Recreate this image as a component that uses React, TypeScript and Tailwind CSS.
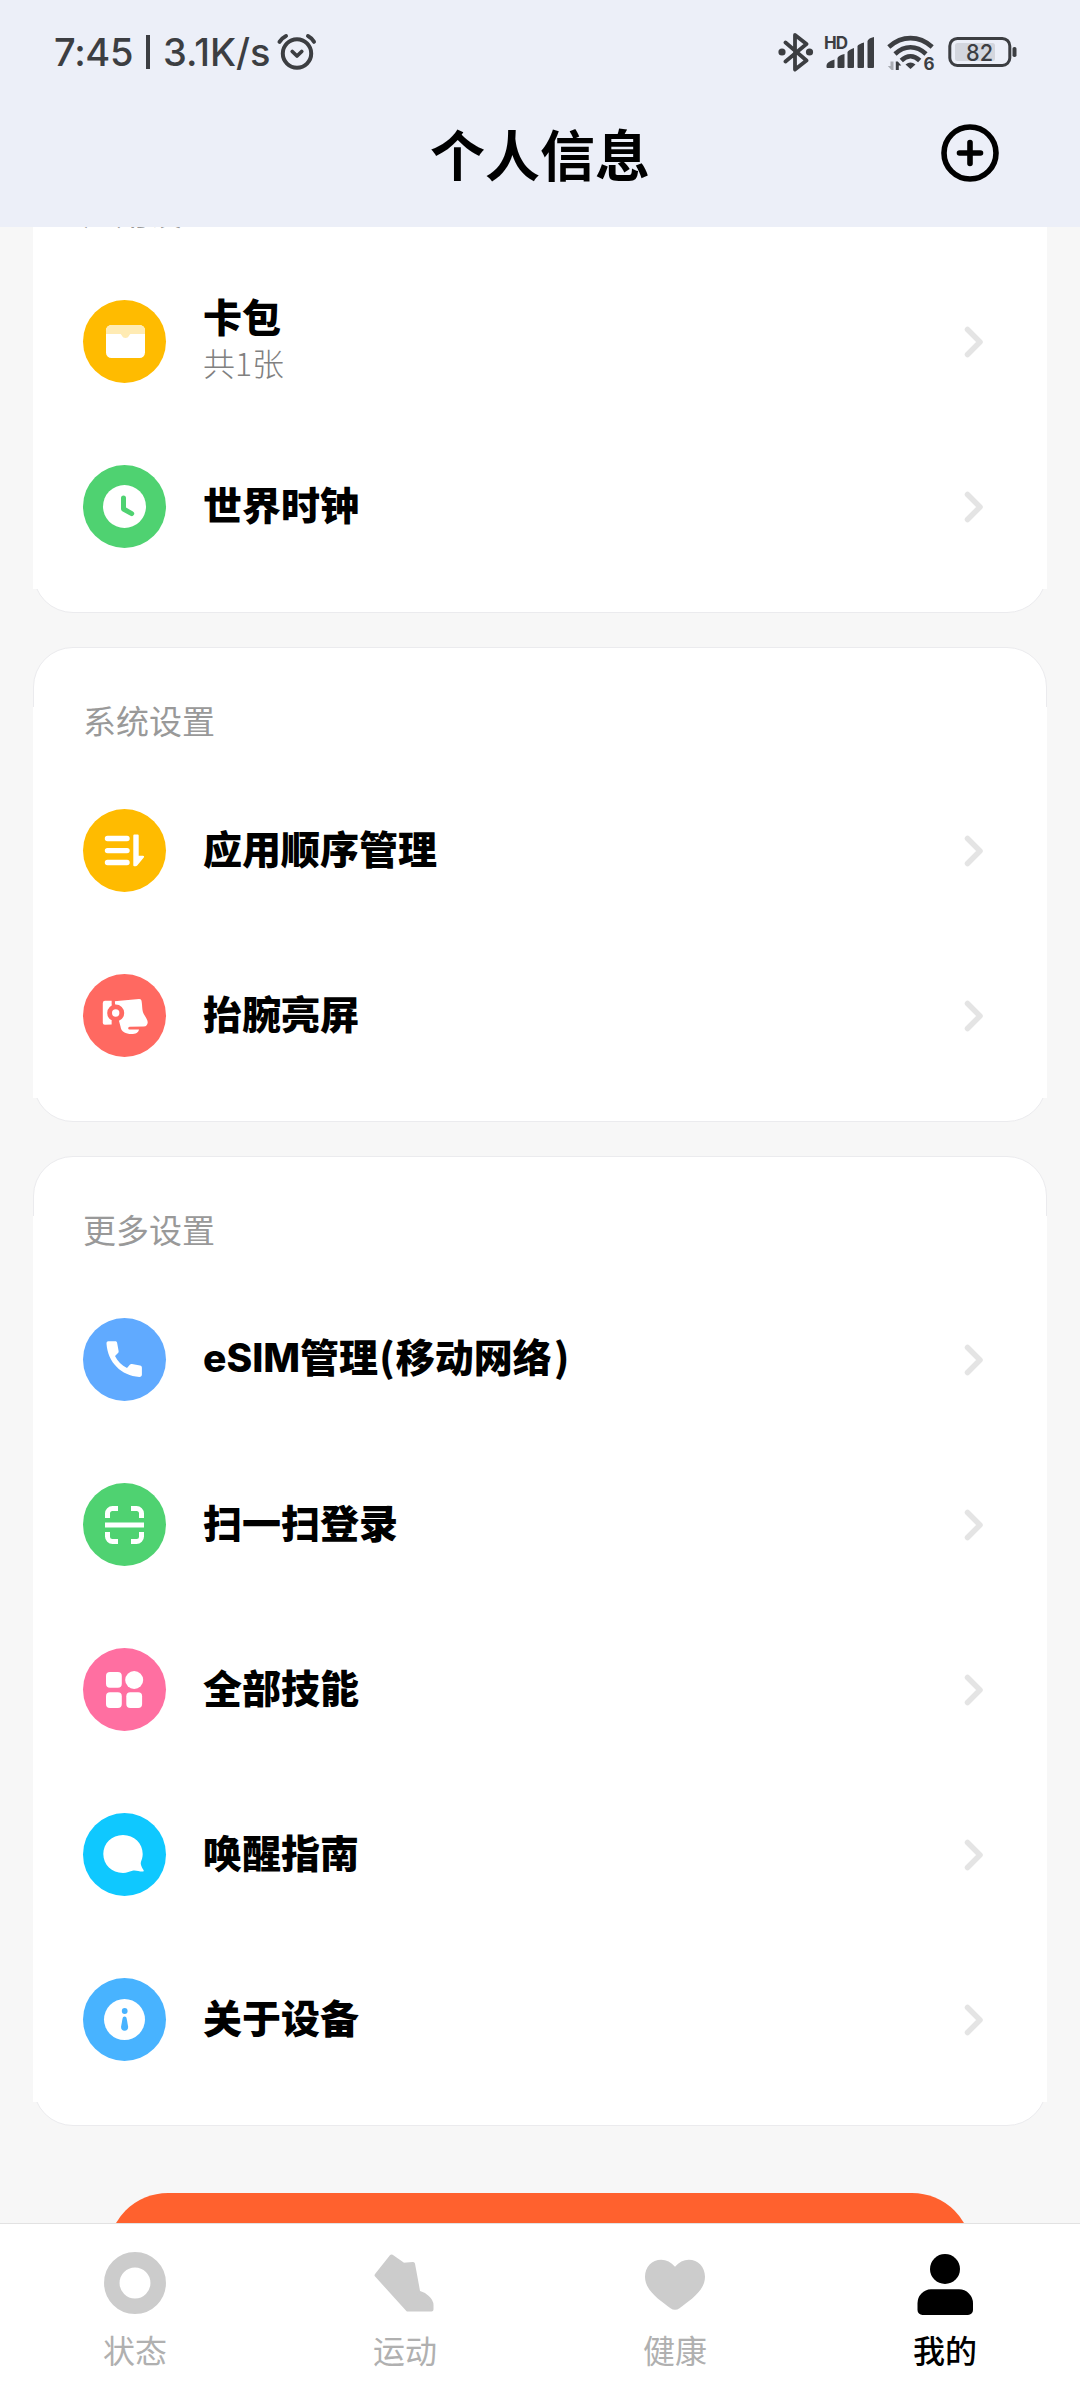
import React from 'react';

const CJK = "font-['Noto_Sans_CJK_SC',sans-serif]";

type Row = {
  label: React.ReactNode;
  sub?: string;
  color: string;
  icon: React.ReactNode;
};

const apps: Row[] = [
  {
    label: '卡包',
    sub: '共1张',
    color: 'bg-[#ffbb00]',
    icon: (
      <>
        <rect x="23" y="25" width="39" height="33" rx="5.5" fill="#fff" />
        <path d="M23 34v-3.5a5.5 5.5 0 0 1 5.5-5.5h28a5.5 5.5 0 0 1 5.5 5.5V34H47.5c-1.2 0-1.4 4-5 4s-3.8-4-5-4z" fill="#ffebb3" />
      </>
    ),
  },
  {
    label: '世界时钟',
    color: 'bg-[#4fd271]',
    icon: (
      <>
        <circle cx="41.5" cy="41.5" r="21.5" fill="#fff" />
        <path d="M40.5 33v11l8.2 4.6" fill="none" stroke="#4fd271" strokeWidth="5" strokeLinecap="round" strokeLinejoin="round" />
      </>
    ),
  },
];

const system: Row[] = [
  {
    label: '应用顺序管理',
    color: 'bg-[#ffbb00]',
    icon: (
      <>
        <path d="M24.5 29.5h19.5M24.5 41.6h19.5M24.5 53.5h19.5" stroke="#fff" strokeWidth="5.4" strokeLinecap="round" />
        <path d="M51.3 25.4h3.4a1 1 0 0 1 1 1v20.4h4.2c1.2 0 1.5.9.9 1.7l-6.6 8a2 2 0 0 1-1.6.8h-1.3a1 1 0 0 1-1-1V26.4a1 1 0 0 1 1-1z" fill="#fff" />
      </>
    ),
  },
  {
    label: '抬腕亮屏',
    color: 'bg-[#ff6961]',
    icon: (
      <>
        <path d="M22 26.8h6.8v23.6l-7 .3a2 2 0 0 1-2-2V29a2.2 2.2 0 0 1 2.2-2.2z" fill="#fff" />
        <path d="M31.5 27.2L56 25.1c1.6-.1 2.4.7 2.6 2.2.9 5.4.2 9 2.3 13 1.4 2.6 3.9 5.4 3.8 8.2-.2 2.4-1.2 3.9-4 4l-14 .3c-2 .1-2 2.7 0 2.7h9.3c-.4 3.2-3.3 4.5-7.7 4.5-5.3 0-10.3-2.2-10.8-7.5L36 47z" fill="#fff" />
        <path d="M28.8 26h3v4.6h-3zM28.8 47h3v5h-3z" fill="#ff6961" />
        <circle cx="32.7" cy="39" r="6.1" fill="#fff" stroke="#ff6961" strokeWidth="4.8" />
      </>
    ),
  },
];

const more: Row[] = [
  {
    label: (
      <>
        <span className="font-['Inter'] font-extrabold">eSIM</span>管理
        <span className="mr-px ml-px">(</span>移动网络<span className="ml-0.5">)</span>
      </>
    ),
    color: 'bg-[#60aaff]',
    icon: (
      <path
        d="M25.3 23.2h7c1 0 1.7.6 1.8 1.6l1.5 8.2c.2.9 0 1.5-.6 2.1l-3 3c2.6 5.2 6.6 9.2 12 11.9l2.8-3.2c.6-.7 1.3-.9 2.2-.7l8 1.5c1.2.2 1.9.9 1.9 2.1v6.9c0 1.6-.9 2.3-2.5 2.3-18.3-1.3-31.5-14.5-32.9-33.2-.1-1.6.4-2.5 1.8-2.5z"
        fill="#fff"
      />
    ),
  },
  {
    label: '扫一扫登录',
    color: 'bg-[#4fd271]',
    icon: (
      <path
        d="M35 25.5h-5.5a5 5 0 0 0-5 5V35M48 25.5h5.5a5 5 0 0 1 5 5V35M35 58.5h-5.5a5 5 0 0 1-5-5V49M48 58.5h5.5a5 5 0 0 0 5-5V49M22 42h39"
        fill="none"
        stroke="#fff"
        strokeWidth="5"
      />
    ),
  },
  {
    label: '全部技能',
    color: 'bg-[#ff6fa1]',
    icon: (
      <g fill="#fff">
        <rect x="23" y="24" width="15.8" height="15.8" rx="4" />
        <circle cx="51.2" cy="32" r="9" />
        <rect x="23" y="44.3" width="15.8" height="15.8" rx="4" />
        <rect x="43.3" y="44.3" width="15.8" height="15.8" rx="4" />
      </g>
    ),
  },
  {
    label: '唤醒指南',
    color: 'bg-[#0fc8ff]',
    icon: (
      <path
        d="M40 22c11.2 0 19.7 8.3 19.7 19 0 3.3-1 6-1.8 8-.7 2 .8 5.3 2.6 8 .5.9.2 1.5-.7 1.5-3.7.1-6.8-1.5-9.6-.9-3.3 1-6.3 2.4-10.2 2.4-11.2 0-19.7-8.5-19.7-19S28.8 22 40 22z"
        fill="#fff"
      />
    ),
  },
  {
    label: '关于设备',
    color: 'bg-[#48b3ff]',
    icon: (
      <>
        <circle cx="41.5" cy="41.5" r="20.5" fill="#fff" />
        <circle cx="41.7" cy="33" r="2.9" fill="#48b3ff" />
        <path d="M41.6 38.5c1.2 0 1.8.9 2.1 2.3l1.4 7.7c.4 2.5-1.2 4.3-3.5 4.3s-3.9-1.8-3.5-4.3l1.4-7.7c.3-1.4.9-2.3 2.1-2.3z" fill="#48b3ff" />
      </>
    ),
  },
];

const tabs = [
  {
    label: '状态',
    icon: <circle cx="32" cy="32" r="23.2" fill="none" stroke="#ccc" strokeWidth="15.5" />,
  },
  {
    label: '运动',
    icon: (
      <path
        d="M18.5 5.5L30.6 13.8L40 12.9L45.3 41.5C52 43.5 58.5 48.5 58.5 54V58.6H34.8L3.6 24.2Z"
        fill="#ccc"
        stroke="#ccc"
        strokeWidth="4"
        strokeLinejoin="round"
      />
    ),
  },
  {
    label: '健康',
    icon: (
      <path
        d="M32 15.7C28 11 23.5 8.7 18.2 8.7 9 8.7 2 16 2 25.7 2 40 17.5 49.5 27.5 57.2Q32 60.2 36.5 57.2C46.5 49.5 62 40 62 25.7 62 16 55 8.7 45.8 8.7 40.5 8.7 36 11 32 15.7z"
        fill="#ccc"
      />
    ),
  },
  {
    label: '我的',
    active: true,
    icon: (
      <g fill="#000">
        <circle cx="32" cy="18" r="15" />
        <path d="M18 38.3h28a14 14 0 0 1 14 14V59a5 5 0 0 1-5 5H9.5a5 5 0 0 1-5-5v-6.7A14 14 0 0 1 18 38.3z" />
      </g>
    ),
  },
];

function StatusBar() {
  return (
    <div className="flex h-[103px] items-start justify-between pt-8 pl-[54px] pr-[62px] text-[#3c3e42]">
      <div className="flex h-10 items-center font-['Inter'] text-[38px] leading-10 font-medium">
        <span className="w-[92px] tracking-[-0.3px]">7:45</span>
        <span className="h-[34px] w-1 bg-[#3c3e42]" />
        <span className="ml-[13px] w-[113px]">3.1K/s</span>
        <svg width="42" height="40" viewBox="0 0 42 40" fill="none" stroke="currentColor" strokeLinecap="round" strokeLinejoin="round">
          <circle cx="21" cy="21.5" r="14.2" strokeWidth="4" />
          <path d="M16.3 19.5l4.7 4.5 4.7-4.5" strokeWidth="3.8" />
          <path d="M3.5 9.8Q6 6 10 4M38 9.8Q35.8 6 32 4" strokeWidth="4" />
        </svg>
      </div>

      <div className="flex h-10">
        <svg className="mr-[9px]" width="38" height="40" viewBox="0 0 38 40">
          <path d="M8.5 10.5L29.5 28.5L18 37.5V3L29.5 12L8.5 29.5" fill="none" stroke="currentColor" strokeWidth="3.8" strokeLinejoin="round" strokeLinecap="round" />
          <circle cx="5" cy="20" r="3.6" fill="currentColor" />
          <circle cx="32.5" cy="20" r="3.6" fill="currentColor" />
        </svg>
        <svg className="mr-[11px]" width="52" height="40" viewBox="0 0 52 40" fill="currentColor">
          <text x="0" y="16.5" fontSize="17" fontWeight="700" fontFamily="Inter" textLength="24">HD</text>
          <path d="M2.5 33.5q0-3.5 8-6V35q0 1-1 1h-6q-1 0-1-1zM13.5 26q1-2.5 7-4V35q0 1-1 1h-5q-1 0-1-1zM23.5 20q1-2 6.5-4V35q0 1-1 1h-4.5q-1 0-1-1zM33.5 14q1-2 6.5-3.5V35q0 1-1 1h-4.5q-1 0-1-1zM43.5 9q1-3 6.5-4V35q0 1-1 1h-4.5q-1 0-1-1z" />
        </svg>
        <svg className="mr-[13px]" width="48" height="40" viewBox="0 0 48 40">
          <g fill="none" stroke="currentColor" strokeWidth="4.6">
            <path d="M1.8 15C15 3.2 32 3.2 45.2 15" />
            <path d="M8 22C17.5 13 29.5 13 39 22" />
            <path d="M14.3 28.5C20 23 27 23 32.7 28.5" />
          </g>
          <path d="M23.5 37l-5-4.6q5-4 10 0z" fill="currentColor" />
          <path d="M6.5 29.5V38H4.5L.8 34h2.7v-4.5z" fill="#a9acb3" />
          <path d="M8.8 38V29.5h2l3.5 4h-2.500V38z" fill="currentColor" />
          <text x="36.5" y="38" fontSize="17" fontWeight="700" fontFamily="Inter" fill="currentColor">6</text>
        </svg>
        <svg width="70" height="40" viewBox="0 0 70 40">
          <rect x="1.8" y="6.4" width="60" height="27" rx="7.5" fill="none" stroke="currentColor" strokeWidth="3" />
          <rect x="7" y="11" width="40" height="18" rx="2.5" fill="#d3d6de" />
          <rect x="64.5" y="15" width="4" height="10" rx="1.8" fill="currentColor" />
          <text x="18" y="28.5" fontSize="23" fontWeight="500" fontFamily="Inter" fill="currentColor" textLength="27" lengthAdjust="spacingAndGlyphs">82</text>
        </svg>
      </div>
    </div>
  );
}

function Section({ title, rows }: { title: string; rows: Row[] }) {
  return (
    <section className="mx-[33px] shrink-0 rounded-[40px] border border-[#ebebee] bg-white pt-[59px] pb-[23px]">
      <div className="-mx-px flex h-[61px] items-start bg-white pl-[50px]">
        <h2 className={`${CJK} -mt-[3px] text-[33px] leading-[33px] text-[#999999]`}>{title}</h2>
      </div>
      <ul>
        {rows.map((row, i) => (
          <li key={i} className="-mx-px flex h-[165px] items-center bg-white pl-[50px] pr-[63px]">
            <span className={`${row.color} h-[83px] w-[83px] rounded-full`}>
              <svg width="83" height="83" viewBox="0 0 83 83">{row.icon}</svg>
            </span>
            <div className={`${CJK} ml-[37px] flex-1 pb-[7px]`}>
              <div className="text-[39px] leading-[48px] font-black text-black">{row.label}</div>
              {row.sub && <div className="text-[32px] leading-[46px] font-light text-[#808080]">{row.sub}</div>}
            </div>
            <svg width="20" height="34" viewBox="0 0 20 34" fill="none" stroke="#e4e4e4" strokeWidth="5.5">
              <path d="M3.5 4.5l12.5 12.5L3.5 29.5" strokeLinejoin="round" strokeLinecap="round" />
            </svg>
          </li>
        ))}
      </ul>
    </section>
  );
}

export default function App() {
  return (
    <div className="flex h-[2400px] w-[1080px] flex-col overflow-hidden bg-[#f7f7f7]">
      {/* Header */}
      <header className="h-[227px] shrink-0 bg-[#eceff8]">
        <StatusBar />
        <div className="grid h-[100px] grid-cols-[1fr_auto_1fr] items-center pr-[81px] pl-[81px]">
          <span />
          <h1 className={`${CJK} pb-[3px] text-[55px] leading-[80px] font-bold text-black`}>个人信息</h1>
          <button className="justify-self-end">
            <svg width="58" height="58" viewBox="0 0 58 58" fill="none" stroke="#000" strokeWidth="5.6">
              <circle cx="29" cy="29" r="26" />
              <path d="M29 18.5v21M18.5 29h21" strokeLinecap="round" />
            </svg>
          </button>
        </div>
      </header>

      {/* Settings list, scrolled under the header */}
      <main className="flex min-h-0 flex-1 flex-col gap-[34px] overflow-hidden">
        <div className="-mt-[89px] shrink-0">
          <Section title="应用设置" rows={apps} />
        </div>
        <Section title="系统设置" rows={system} />
        <Section title="更多设置" rows={more} />
        <button className="mx-[108px] mt-[33px] h-[120px] shrink-0 rounded-full bg-[#ff612e]" />
      </main>

      {/* Bottom tabs */}
      <nav className="grid h-[177px] shrink-0 grid-cols-4 border-t border-[#e2e2e2] bg-white pt-[27px]">
        {tabs.map((tab) => (
          <div key={tab.label} className="flex flex-col items-center">
            <svg width="64" height="64" viewBox="0 0 64 64">{tab.icon}</svg>
            <span className={`${CJK} mt-[11px] text-[32px] leading-[46px] ${tab.active ? 'font-medium text-black' : 'text-[#b0b0b0]'}`}>
              {tab.label}
            </span>
          </div>
        ))}
      </nav>
    </div>
  );
}
